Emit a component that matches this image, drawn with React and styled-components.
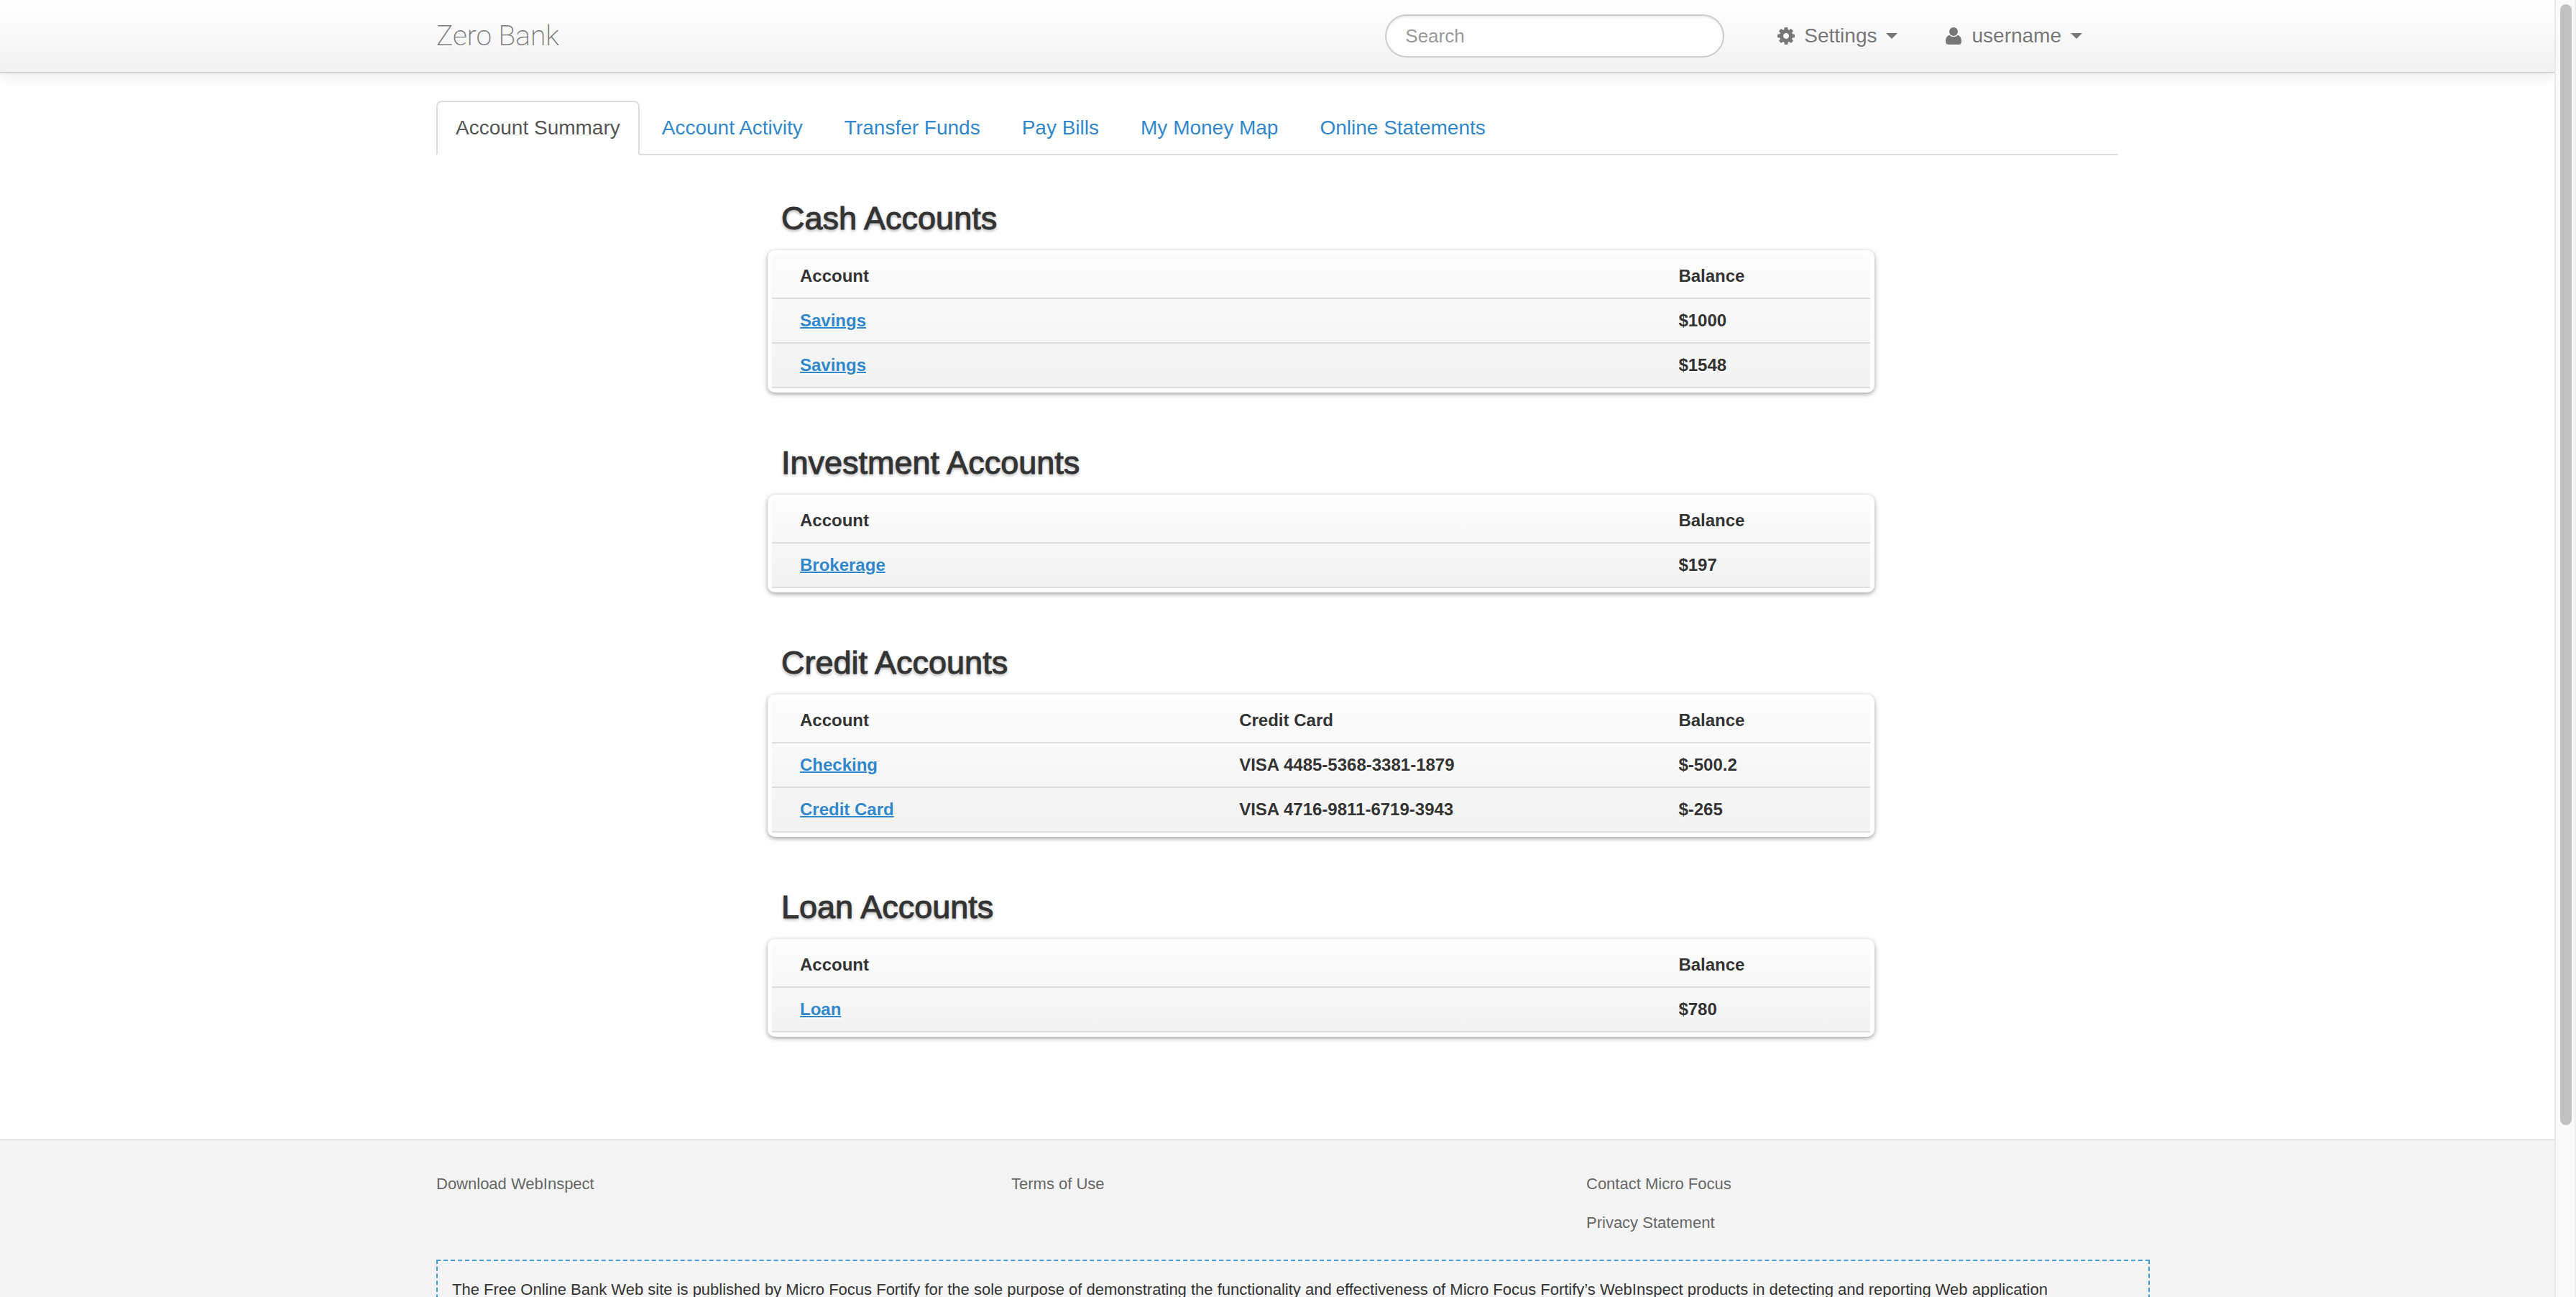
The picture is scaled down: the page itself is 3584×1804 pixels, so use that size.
import React from "react";
import styled, { createGlobalStyle } from "styled-components";

const GlobalStyle = createGlobalStyle`
  *, *::before, *::after { box-sizing: border-box; }
  body {
    margin: 0;
    background: #fff;
    color: #333;
    font-family: "Liberation Sans", Arial, sans-serif;
    font-size: 24px;
    line-height: 40px;
  }
`;

const Shell = styled.div`
  display: flex;
  height: 100vh;
  overflow: hidden;
`;

const Page = styled.div`
  flex: 1;
  min-width: 0;
  overflow: hidden;
`;

const ScrollTrack = styled.div`
  flex: none;
  width: 30px;
  padding: 6px 4px 6px 6px;
  background: #fafafa;
  border-left: 2px solid #e8e8e8;
  border-right: 2px solid #ededed;
`;

const ScrollThumb = styled.div`
  width: 16px;
  height: 87%;
  border-radius: 8px;
  background: #c1c1c1;
`;

const Container = styled.div`
  width: 100%;
  max-width: 2340px;
  margin: 0 auto;
`;

const Header = styled.header`
  background: linear-gradient(to bottom, #fff, #f2f2f2);
  border-bottom: 2px solid #d4d4d4;
  box-shadow: 0 2px 20px rgba(0, 0, 0, 0.1);
`;

const HeaderBar = styled(Container)`
  display: flex;
  align-items: center;
  height: 100px;
  padding-right: 50px;
`;

const Brand = styled.a`
  margin-right: auto;
  color: #777;
  font-family: Roboto, "Open Sans", sans-serif;
  font-size: 39px;
  font-weight: 200;
  text-decoration: none;
  text-shadow: 0 2px 0 #fff;
`;

const SearchBox = styled.input`
  width: 472px;
  height: 60px;
  margin-right: 74px;
  padding: 0 26px;
  border: 2px solid #ccc;
  border-radius: 30px;
  background: #fff;
  box-shadow: inset 0 2px 2px rgba(0, 0, 0, 0.075);
  color: #555;
  font: 26px "Liberation Sans", Arial, sans-serif;
  &::placeholder { color: #999; opacity: 1; }
`;

const Menus = styled.nav`
  display: flex;
  gap: 66px;
`;

const MenuButton = styled.button`
  display: flex;
  align-items: center;
  gap: 13px;
  padding: 0;
  border: 0;
  background: none;
  color: #777;
  font: 28px/40px "Liberation Sans", Arial, sans-serif;
  text-shadow: 0 2px 0 #fff;
`;

const Icon = styled.svg`
  display: block;
  width: 24px;
  height: 24px;
  fill: currentColor;
  filter: drop-shadow(0 2px 0 #fff);
`;

const Caret = styled.span`
  border: 8px solid transparent;
  border-top-color: #777;
  border-bottom: 0;
`;

const Tabs = styled.nav`
  display: flex;
  gap: 4px;
  margin-top: 38px;
  border-bottom: 2px solid #ddd;
`;

const Tab = styled.a`
  margin-bottom: -2px;
  padding: 16px 25px;
  border: 2px solid ${(p) => (p.$active ? "#ddd" : "transparent")};
  border-bottom-color: ${(p) => (p.$active ? "#fff" : "transparent")};
  border-radius: 8px 8px 0 0;
  background: ${(p) => (p.$active ? "#fff" : "none")};
  color: ${(p) => (p.$active ? "#555" : "#3187cb")};
  font-size: 28px;
  text-decoration: none;
`;

const Summary = styled.main`
  display: grid;
  grid-template-columns: 461fr 1540fr 339fr;
  padding: 56px 0 76px;
`;

const Accounts = styled.div`
  grid-column: 2;
`;

const Section = styled.section`
  margin-bottom: 66px;
`;

const Title = styled.h2`
  margin: 0 0 12px;
  padding-left: 19px;
  font-size: 45px;
  font-weight: 400;
  line-height: 64px;
  -webkit-text-stroke: 1px #333;
  text-shadow: 0 2px 4px rgba(0, 0, 0, 0.4);
`;

const Board = styled.div`
  padding: 6px;
  border-radius: 10px;
  background: #fff;
  box-shadow: 0 2px 6px rgba(0, 0, 0, 0.4);
`;

const Table = styled.table`
  width: 100%;
  border-collapse: separate;
  border-spacing: 0;
  table-layout: fixed;
  border-radius: 8px 8px 0 0;
  background: linear-gradient(to bottom, #fcfcfc, #f2f2f2);
  font-size: 24px;
  font-weight: 700;
  text-align: left;
  text-shadow: 0 2px 0 #fff;
`;

const cell = `
  padding: 10px 39px;
  border-bottom: 2px solid #ddd;
`;

const HeadCell = styled.th`
  ${cell}
  width: ${(p) => p.$width};
`;

const Cell = styled.td`
  ${cell}
`;

const AccountLink = styled.a`
  color: #3187cb;
  text-decoration: underline;
  text-decoration-thickness: 2px;
`;

const Footer = styled.footer`
  padding-top: 34px;
  border-top: 2px solid #e5e5e5;
  background: #f4f4f4;
  font-size: 22px;
`;

const FooterColumns = styled.div`
  display: grid;
  grid-template-columns: repeat(3, 1fr);
  gap: 60px;
`;

const LinkList = styled.ul`
  margin: 0;
  padding: 0;
  list-style: none;
  line-height: 54px;
`;

const FooterLink = styled.a`
  color: #666;
  text-decoration: none;
`;

const Disclaimer = styled.p`
  margin: 24px -44px 0 0;
  padding: 20px;
  border: 2px dashed #419bd8;
`;

const tabs = [
  "Account Summary",
  "Account Activity",
  "Transfer Funds",
  "Pay Bills",
  "My Money Map",
  "Online Statements",
];

const sections = [
  {
    title: "Cash Accounts",
    rows: [
      ["Savings", "", "$1000"],
      ["Savings", "", "$1548"],
    ],
  },
  { title: "Investment Accounts", rows: [["Brokerage", "", "$197"]] },
  {
    title: "Credit Accounts",
    detail: "Credit Card",
    rows: [
      ["Checking", "VISA 4485-5368-3381-1879", "$-500.2"],
      ["Credit Card", "VISA 4716-9811-6719-3943", "$-265"],
    ],
  },
  { title: "Loan Accounts", rows: [["Loan", "", "$780"]] },
];

const footerLinks = [
  ["Download WebInspect"],
  ["Terms of Use"],
  ["Contact Micro Focus", "Privacy Statement"],
];

const GearIcon = () => (
  <Icon viewBox="0 0 1536 1536" aria-hidden="true">
    <path d="M1024 768q0-106-75-181t-181-75-181 75-75 181 75 181 181 75 181-75 75-181zm512-109v222q0 12-8 23t-20 13l-185 28q-19 54-39 91 35 50 107 138 10 12 10 25t-9 23q-27 37-99 108t-94 71q-12 0-26-9l-138-108q-44 23-91 38-16 136-29 186-7 28-36 28H657q-14 0-24.500-8.500T621 1506l-28-184q-49-16-90-37l-141 107q-10 9-25 9-14 0-25-11-126-114-165-168-7-10-7-23 0-12 8-23 15-21 51-66.500t54-70.500q-27-50-41-99L29 913q-13-2-21-12.500T0 877V655q0-12 8-23t19-13l186-28q14-46 39-92-40-57-107-138-10-12-10-24 0-10 9-23 26-36 98.500-107.500T337 135q13 0 26 10l138 107q44-23 91-38 16-136 29-186 7-28 36-28h222q14 0 24.500 8.500T915 30l28 184q49 16 90 37l142-107q9-9 24-9 13 0 25 10 129 119 165 170 7 8 7 22 0 12-8 23-15 21-51 66.500t-54 70.500q26 50 41 98l183 28q13 2 21 12.500t8 23.500z" />
  </Icon>
);

const UserIcon = () => (
  <Icon viewBox="0 0 24 24" aria-hidden="true">
    <circle cx="12" cy="6" r="6" />
    <path d="M6.500 11C2.500 11.500 1 15.500 1 19.500 1 22.500 2.500 24 5 24h14c2.500 0 4-1.500 4-4.500 0-4-1.500-8-5.500-8.500-3 3-8 3-11 0z" />
  </Icon>
);

function AccountSection({ title, detail, rows }) {
  return (
    <Section>
      <Title>{title}</Title>
      <Board>
        <Table aria-label={title}>
          <thead>
            <tr>
              <HeadCell $width="40%">Account</HeadCell>
              <HeadCell $width="40%">{detail}</HeadCell>
              <HeadCell $width="20%">Balance</HeadCell>
            </tr>
          </thead>
          <tbody>
            {rows.map(([name, card, balance], i) => (
              <tr key={i}>
                <Cell>
                  <AccountLink href="#">{name}</AccountLink>
                </Cell>
                <Cell>{card}</Cell>
                <Cell>{balance}</Cell>
              </tr>
            ))}
          </tbody>
        </Table>
      </Board>
    </Section>
  );
}

export default function App() {
  return (
    <>
      <GlobalStyle />
      <Shell>
        <Page>
          <Header>
            <HeaderBar>
              <Brand href="#">Zero Bank</Brand>
              <SearchBox type="text" placeholder="Search" aria-label="Search" />
              <Menus>
                <MenuButton type="button">
                  <GearIcon />
                  Settings
                  <Caret />
                </MenuButton>
                <MenuButton type="button">
                  <UserIcon />
                  username
                  <Caret />
                </MenuButton>
              </Menus>
            </HeaderBar>
          </Header>
          <Container>
            <Tabs>
              {tabs.map((label, i) => (
                <Tab key={label} href="#" $active={i === 0}>
                  {label}
                </Tab>
              ))}
            </Tabs>
            <Summary>
              <Accounts>
                {sections.map((s) => (
                  <AccountSection key={s.title} {...s} />
                ))}
              </Accounts>
            </Summary>
          </Container>
          <Footer>
            <Container>
              <FooterColumns>
                {footerLinks.map((links) => (
                  <LinkList key={links[0]}>
                    {links.map((label) => (
                      <li key={label}>
                        <FooterLink href="#">{label}</FooterLink>
                      </li>
                    ))}
                  </LinkList>
                ))}
              </FooterColumns>
              <Disclaimer>
                The Free Online Bank Web site is published by Micro Focus Fortify for the sole purpose of
                demonstrating the functionality and effectiveness of Micro Focus Fortify’s WebInspect products
                in detecting and reporting Web application
              </Disclaimer>
            </Container>
          </Footer>
        </Page>
        <ScrollTrack>
          <ScrollThumb />
        </ScrollTrack>
      </Shell>
    </>
  );
}
